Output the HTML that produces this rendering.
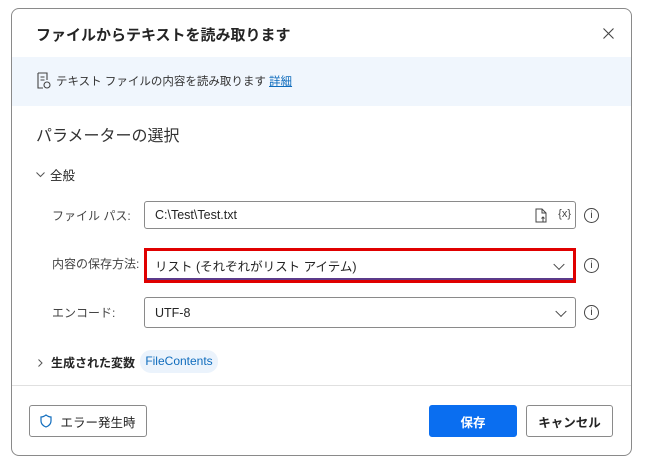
<!DOCTYPE html>
<html><head><meta charset="utf-8"><style>
*{box-sizing:border-box;margin:0;padding:0}
body{width:646px;height:462px;background:#fff;font-family:"Liberation Sans","Noto Sans CJK JP",sans-serif;color:#242424;position:relative;overflow:hidden}
.dlg{position:absolute;left:11px;top:8px;width:621px;height:448px;border:1px solid #8a8a8a;border-radius:8px;background:#fff;overflow:hidden}
.abs{position:absolute}
.title{left:24px;top:15px;font-size:15px;font-weight:bold}
.band{left:0;top:48px;width:621px;height:49px;background:#f0f6fd}
.desc{left:44px;top:64px;font-size:11.5px;color:#333}
.desc a{color:#0f6cbd;text-decoration:underline}
.sec{left:24px;top:113px;font-size:16px;color:#333}
.gen{left:24px;top:156px;font-size:12.5px}
.lab{left:40px;font-size:12px;color:#444}
.inp{position:absolute;left:132px;width:432px;border:1px solid #8a8a8a;border-radius:3px;font-size:12.5px;padding-left:10px;display:flex;align-items:center}
.info{position:absolute;left:572px;width:15px;height:15px;border:1.3px solid #444;border-radius:50%;font-size:10px;text-align:center;line-height:13px;color:#333}
.chev{position:absolute;right:10px;top:50%;width:8px;height:8px;border-right:1.4px solid #444;border-bottom:1.4px solid #444;transform:translateY(-70%) rotate(45deg)}
.btn{position:absolute;top:396px;height:32px;border:1px solid #8a8a8a;border-radius:3px;font-size:12.5px;display:flex;align-items:center;justify-content:center}
</style></head><body>
<div class="dlg">
<div class="abs title">ファイルからテキストを読み取ります</div>
<svg class="abs" style="left:591px;top:19px" width="11" height="11" viewBox="0 0 11 11" stroke="#444" stroke-width="1.1"><path d="M0.5 0.5l10 10M10.5 0.5l-10 10"/></svg>
<div class="abs band"></div>
<svg class="abs" style="left:24px;top:63px" width="16" height="18" viewBox="0 0 16 18" fill="none" stroke="#444" stroke-width="1.1"><path d="M2 1h9v7M2 1v15h5M4.5 5h4M4.5 8h4"/><circle cx="11" cy="13" r="3"/></svg>
<div class="abs desc">テキスト ファイルの内容を読み取ります <a>詳細</a></div>
<div class="abs sec">パラメーターの選択</div>
<div class="abs gen"><svg width="9" height="6" viewBox="0 0 9 6" fill="none" stroke="#555" stroke-width="1" style="margin-right:5px;vertical-align:2px"><path d="M0.5 0.5l4 4 4-4"/></svg>全般</div>
<div class="abs lab" style="top:198px">ファイル パス:</div>
<div class="inp" style="top:192px;height:28px">C:\Test\Test.txt
<svg style="position:absolute;right:28px;top:6px" width="12" height="15" viewBox="0 0 12 15" fill="none" stroke="#444" stroke-width="1"><path d="M1 1h6l4 4v9H1z M7 1v4h4 M8 14v-5 M6.5 10.5l1.5-1.5 1.5 1.5"/></svg>
<span style="position:absolute;right:4px;top:6px;font-size:11px;color:#444">{x}</span></div>
<div class="info" style="top:199px">i</div>
<div class="abs lab" style="top:246px">内容の保存方法:</div>
<div class="inp" style="top:239px;height:35px;border:3px solid #e00000;border-radius:0;padding-left:8px;box-shadow:inset 0 -2px 0 #5b3a8a">リスト (それぞれがリスト アイテム)<div class="chev"></div></div>
<div class="info" style="top:249px">i</div>
<div class="abs lab" style="top:295px">エンコード:</div>
<div class="inp" style="top:288px;height:31px">UTF-8<div class="chev"></div></div>
<div class="info" style="top:296px">i</div>
<div class="abs" style="left:26px;top:345px;font-size:12px;font-weight:bold"><svg width="5" height="8" viewBox="0 0 5 8" fill="none" stroke="#555" stroke-width="1" style="margin-right:8px"><path d="M0.5 0.5l3.5 3.5-3.5 3.5"/></svg>生成された変数</div>
<div class="abs" style="left:128px;top:341px;width:78px;height:23px;background:#ebf3fc;border-radius:11px;color:#0f6cbd;font-size:12px;line-height:23px;text-align:center">FileContents</div>
<div class="abs" style="left:0;top:376px;width:621px;height:1px;background:#e0e0e0"></div>
<div class="btn" style="left:17px;width:118px"><svg width="12" height="14" viewBox="0 0 12 14" fill="none" stroke="#0f6cbd" stroke-width="1.2" style="margin-right:8px"><path d="M6 1C4 2.5 2.5 3 1 3v4c0 3 2.5 5 5 6 2.5-1 5-3 5-6V3C9.5 3 8 2.5 6 1z"/></svg>エラー発生時</div>
<div class="btn" style="left:417px;width:88px;background:#0a6ef0;border-color:#0a6ef0;color:#fff;font-weight:bold">保存</div>
<div class="btn" style="left:514px;width:87px;font-weight:bold">キャンセル</div>
</div>
</body></html>
